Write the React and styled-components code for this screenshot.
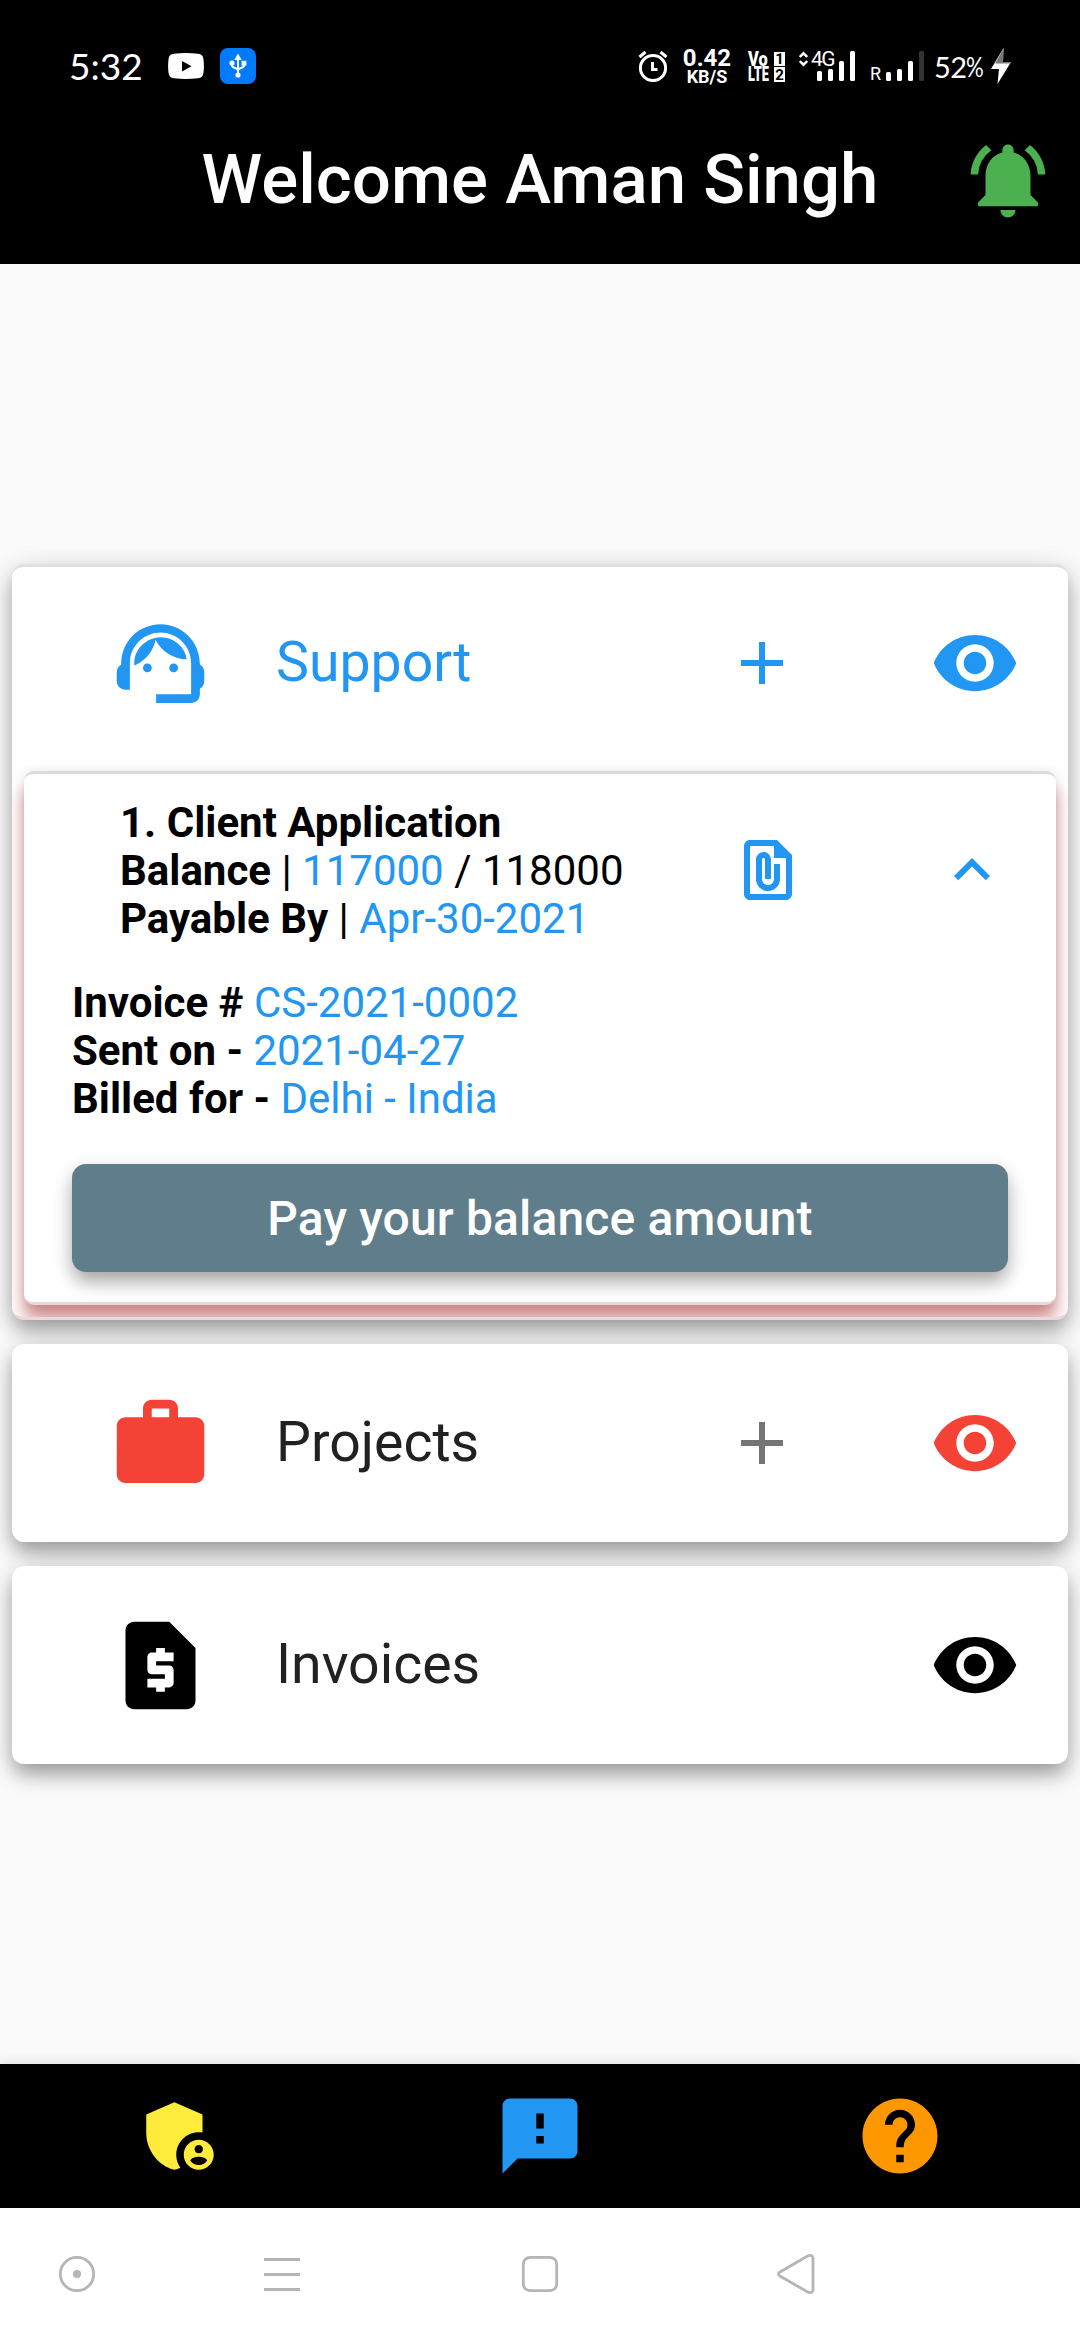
import React from 'react';
import styled, { createGlobalStyle } from 'styled-components';
import {
  MdNotificationsActive, MdSupportAgent, MdAdd, MdRemoveRedEye, MdWork, MdRequestPage,
  MdFilePresent, MdExpandLess, MdAdminPanelSettings, MdFeedback, MdHelp,
} from 'react-icons/md';

const BLUE = '#2196f3';
const RED = '#f44336';

const GlobalStyle = createGlobalStyle`
  * { box-sizing: border-box; }
  body { margin: 0; background: #fafafa; font-family: Roboto, "Liberation Sans", sans-serif; }
  svg { display: block; flex: none; }
`;

const Screen = styled.div`
  display: flex;
  flex-direction: column;
  width: 1080px;
  height: 2340px;
  overflow: hidden;
  background: #fafafa;
`;

const Header = styled.header`
  display: flex;
  flex-direction: column;
  height: 264px;
  flex: none;
  background: #000;
  color: #fff;
`;

const StatusBar = styled.div`
  display: flex;
  align-items: flex-start;
  height: 96px;
  padding: 48px 69px 0 69px;
`;

const StatusItem = styled.div`
  flex: none;
  margin-left: ${(p) => p.$gap || 0}px;
  margin-top: ${(p) => p.$drop || 0}px;
`;

const Clock = styled(StatusItem)`
  width: 73px;
  font: 400 37px/35px Lato, sans-serif;
  white-space: nowrap;
`;

const Spacer = styled.div`
  flex: 1;
`;

const UsbBadge = styled(StatusItem)`
  display: grid;
  place-items: center;
  width: 36px;
  height: 36px;
  border-radius: 8px;
  background: #007aff;
`;

const Speed = styled(StatusItem)`
  display: flex;
  flex-direction: column;
  align-items: center;
  width: 48px;
  font-weight: 700;
  white-space: nowrap;
`;

const SpeedValue = styled.span`
  font-size: 24px;
  line-height: 20px;
`;

const SpeedUnit = styled.span`
  font-size: 18px;
  line-height: 17px;
`;

const Volte = styled(StatusItem)`
  display: grid;
  grid-template-columns: 25px 11px;
  grid-template-rows: 14px 15px;
  gap: 1px;
  width: 37px;
  font-size: 20px;
  font-weight: 900;
  line-height: 14px;
`;

const VolteText = styled.span`
  transform: scaleX(${(p) => p.$squeeze});
  transform-origin: left;
  white-space: nowrap;
`;

const VolteSim = styled.span`
  display: grid;
  place-items: center;
  background: #fff;
  color: #000;
  font-size: 15px;
  font-weight: 700;
  line-height: 14px;
`;

const Signal = styled(StatusItem)`
  display: flex;
  align-items: flex-end;
  height: 33px;
`;

const DataArrows = styled.svg`
  align-self: flex-start;
`;

const NetworkType = styled.span`
  align-self: flex-start;
  width: 22px;
  margin: 1px -16px 0 3px;
  font-size: 21px;
  line-height: 21px;
  letter-spacing: -1.5px;
`;

const Roaming = styled.span`
  width: 11px;
  margin-right: 5px;
  font-size: 18px;
  line-height: 15px;
`;

const Bars = styled.div`
  display: flex;
  align-items: flex-end;
  gap: 6px;
  height: 30px;
`;

const Bar = styled.i`
  width: 5px;
  height: ${(p) => p.$h}px;
  border-radius: 1.5px;
  background: ${(p) => (p.$off ? '#333' : '#fff')};
`;

const Battery = styled(StatusItem)`
  display: flex;
  width: 52px;
  font: 400 29px/28px Lato, sans-serif;
  letter-spacing: -0.6px;
  white-space: nowrap;
`;

const Percent = styled.span`
  font-size: 27px;
  transform: scaleX(0.82);
  transform-origin: left;
`;

const TitleBar = styled.div`
  display: grid;
  grid-template-columns: 145px 790px 145px;
  align-items: center;
  height: 168px;
`;

const Title = styled.h1`
  grid-column: 2;
  margin: 0;
  font-size: 69px;
  font-weight: 500;
  line-height: 80px;
  text-align: center;
  white-space: nowrap;
`;

const BellButton = styled.div`
  justify-self: center;
  color: #4caf50;
`;

const Content = styled.main`
  display: flex;
  flex-direction: column;
  gap: 24px;
  flex: 1;
  padding: 300px 12px 0;
`;

const Card = styled.section`
  flex: none;
  border-radius: 12px;
  background: #fff;
  box-shadow: 0 12px 18px -3px rgba(0, 0, 0, 0.22), 0 9px 24px rgba(0, 0, 0, 0.16), 0 6px 30px rgba(0, 0, 0, 0.1);
`;

const ExpandedCard = styled(Card)`
  height: 756px;
  overflow: hidden;
  border-top: 3px solid #e0e0e0;
  border-bottom: 3px solid #ebd9d9;
`;

const CardRow = styled.div`
  display: grid;
  grid-template-columns: 105px 513px 72px 132px 90px;
  align-items: center;
  height: ${(p) => p.$height}px;
  padding-left: 96px;
`;

const CardLabel = styled.span`
  padding-left: 63px;
  color: ${(p) => p.$color};
  font-size: 55.4px;
  line-height: 66px;
  white-space: nowrap;
`;

const Tint = styled.span`
  grid-column: ${(p) => p.$col};
  color: ${(p) => p.$color};
`;

const InvoiceCard = styled.section`
  height: 534px;
  margin: 12px 12px 0;
  border-radius: 10px;
  border-top: 3px solid #dcdada;
  border-bottom: 3px solid #e8d8d8;
  background: #fff;
  box-shadow: 0 12px 15px -3px rgba(130, 20, 20, 0.28), 0 18px 15px rgba(183, 28, 28, 0.2), 0 15px 24px rgba(183, 28, 28, 0.16), 0 0 12px rgba(0, 0, 0, 0.08);
`;

const InvoiceHead = styled.div`
  display: grid;
  grid-template-columns: 612px 72px 132px 72px;
  align-items: center;
  height: 192px;
  padding-left: 96px;
`;

const Lines = styled.div`
  padding-top: 2px;
  color: #000;
  font-size: 42px;
  line-height: 48px;
  white-space: nowrap;
`;

const Details = styled(Lines)`
  padding: 13px 48px 0;
`;

const Value = styled.span`
  color: ${BLUE};
`;

const PayButton = styled.button`
  display: block;
  width: 936px;
  height: 108px;
  margin: 41px 48px 0;
  padding: 1px 0 0;
  border: 0;
  border-radius: 14px;
  background: #607d8b;
  color: #fff;
  font: 500 48px/56px Roboto, sans-serif;
  letter-spacing: 0.15px;
  box-shadow: 0 12px 18px -3px rgba(0, 0, 0, 0.22), 0 9px 21px rgba(0, 0, 0, 0.15), 0 3px 24px rgba(0, 0, 0, 0.06);
`;

const TabBar = styled.nav`
  display: grid;
  grid-template-columns: repeat(3, 360px);
  place-items: center;
  height: 144px;
  flex: none;
  background: #000;
  box-shadow: 0 0 12px rgba(0, 0, 0, 0.15);
`;

const SystemNav = styled.div`
  display: flex;
  align-items: center;
  height: 132px;
  flex: none;
  padding-left: 57px;
  background: #fff;
`;

const NavKey = styled.div`
  width: 40px;
  margin-right: ${(p) => p.$after}px;
`;

const NavGlyph = ({ children }) => (
  <svg width="40" height="44" viewBox="0 0 40 44" fill="none" stroke="#b5b5b5" strokeWidth="2.8">{children}</svg>
);

function AlarmIcon() {
  return (
    <svg width="30" height="34" viewBox="0 0 30 34" fill="none" stroke="#fff" strokeWidth="3">
      <circle cx="15" cy="20" r="12.6" />
      <path d="M1.500 9 7.500 4M28.500 9 22.500 4" />
      <path d="M14.500 14v7.500h5" />
    </svg>
  );
}

function UsbIcon() {
  return (
    <svg width="18" height="24" viewBox="0 0 18 24" fill="#fff" stroke="#fff" strokeWidth="2">
      <path d="M9 4v17M3 9v2.500c0 3 6 2 6 5M15 9v2.500c0 3-6 2-6 5" fill="none" />
      <path d="M9 1.500 11 5H7z" />
      <circle cx="3" cy="9" r="1.600" />
      <rect x="13.600" y="7.800" width="2.800" height="2.800" />
      <circle cx="9" cy="21" r="1.600" />
    </svg>
  );
}

function Status() {
  return (
    <StatusBar>
      <Clock>5:32</Clock>
      <StatusItem $gap={26} $drop={5}>
        <svg width="36" height="26" viewBox="0 0 36 26">
          <path d="M6 .8Q18-.6 30 .8q5 .4 5.400 5Q36.400 13 35.400 20.200q-.4 4.600-5.400 5-12 1.400-24 0-5-.4-5.400-5Q-.4 13 .6 5.800 1 1.200 6 .8z" fill="#fff" />
          <path d="M14 8v10.500l9.500-5.250z" fill="#000" />
        </svg>
      </StatusItem>
      <UsbBadge $gap={16}><UsbIcon /></UsbBadge>
      <Spacer />
      <StatusItem><AlarmIcon /></StatusItem>
      <Speed $gap={15}>
        <SpeedValue>0.42</SpeedValue>
        <SpeedUnit>KB/S</SpeedUnit>
      </Speed>
      <Volte $gap={17} $drop={4}>
        <VolteText $squeeze={0.82}>Vo</VolteText>
        <VolteSim>1</VolteSim>
        <VolteText $squeeze={0.64}>LTE</VolteText>
        <VolteSim>2</VolteSim>
      </Volte>
      <Signal $gap={14}>
        <DataArrows width="9" height="20" viewBox="0 0 9 20" fill="none" stroke="#fff" strokeWidth="2.400">
          <path d="M.8 9 4.500 5.300 8.200 9M.8 13l3.700 3.700L8.200 13" />
        </DataArrows>
        <NetworkType>4G</NetworkType>
        <Bars><Bar $h={10} /><Bar $h={12} /><Bar $h={20} /><Bar $h={30} /></Bars>
      </Signal>
      <Signal $gap={15}>
        <Roaming>R</Roaming>
        <Bars><Bar $h={9} /><Bar $h={12} /><Bar $h={20} /><Bar $h={30} $off /></Bars>
      </Signal>
      <Battery $gap={10} $drop={5}>52<Percent>%</Percent></Battery>
      <StatusItem $gap={5}>
        <svg width="20" height="36" viewBox="0 0 20 36">
          <path d="M12.500 0 0 21h8L6.500 36 20 14h-8z" fill="#fff" />
          <path d="M12.500 0 4.200 15.500H19L20 14h-8z" fill="#777" />
        </svg>
      </StatusItem>
    </StatusBar>
  );
}

function CategoryRow({ icon: Icon, label, tint, textColor, addColor, height = 198 }) {
  return (
    <CardRow $height={height}>
      <Tint $col={1} $color={tint}><Icon size={105} /></Tint>
      <CardLabel $color={textColor}>{label}</CardLabel>
      {addColor && <Tint $col={3} $color={addColor}><MdAdd size={72} /></Tint>}
      <Tint $col={5} $color={tint}><MdRemoveRedEye size={90} /></Tint>
    </CardRow>
  );
}

export default function App() {
  return (
    <Screen>
      <GlobalStyle />
      <Header>
        <Status />
        <TitleBar>
          <Title>Welcome Aman Singh</Title>
          <BellButton><MdNotificationsActive size={90} /></BellButton>
        </TitleBar>
      </Header>
      <Content>
        <ExpandedCard>
          <CategoryRow icon={MdSupportAgent} label="Support" tint={BLUE} textColor={BLUE} addColor={BLUE} height={192} />
          <InvoiceCard>
            <InvoiceHead>
              <Lines>
                <b>1. Client Application</b><br />
                <b>Balance</b> | <Value>117000</Value> / 118000<br />
                <b>Payable By</b> | <Value>Apr-30-2021</Value>
              </Lines>
              <Tint $col={2} $color={BLUE}><MdFilePresent size={72} /></Tint>
              <Tint $col={4} $color={BLUE}><MdExpandLess size={72} /></Tint>
            </InvoiceHead>
            <Details>
              <b>Invoice #</b> <Value>CS-2021-0002</Value><br />
              <b>Sent on -</b> <Value>2021-04-27</Value><br />
              <b>Billed for -</b> <Value>Delhi - India</Value>
            </Details>
            <PayButton>Pay your balance amount</PayButton>
          </InvoiceCard>
        </ExpandedCard>
        <Card>
          <CategoryRow icon={MdWork} label="Projects" tint={RED} textColor="#212121" addColor="#757575" />
        </Card>
        <Card>
          <CategoryRow icon={MdRequestPage} label="Invoices" tint="#000" textColor="#212121" />
        </Card>
      </Content>
      <TabBar>
        <Tint $color="#ffeb3b"><MdAdminPanelSettings size={90} /></Tint>
        <Tint $color={BLUE}><MdFeedback size={90} /></Tint>
        <Tint $color="#ff9800"><MdHelp size={90} /></Tint>
      </TabBar>
      <SystemNav>
        <NavKey $after={165}>
          <NavGlyph><circle cx="20" cy="22" r="16.700" /><circle cx="20" cy="22" r="4" fill="#b5b5b5" stroke="none" /></NavGlyph>
        </NavKey>
        <NavKey $after={218}>
          <NavGlyph><path d="M2 7.500h36M2 22.500h36M2 37.500h36" /></NavGlyph>
        </NavKey>
        <NavKey $after={216}>
          <NavGlyph><rect x="3.300" y="5.300" width="33.400" height="33.400" rx="7" /></NavGlyph>
        </NavKey>
        <NavKey $after={0}>
          <NavGlyph><path d="M3.500 20.200 32 3.800q5-1.500 5 2.500v31.400q0 4-5 2.500L3.500 23.800q-2-1.800 0-3.600z" /></NavGlyph>
        </NavKey>
      </SystemNav>
    </Screen>
  );
}
